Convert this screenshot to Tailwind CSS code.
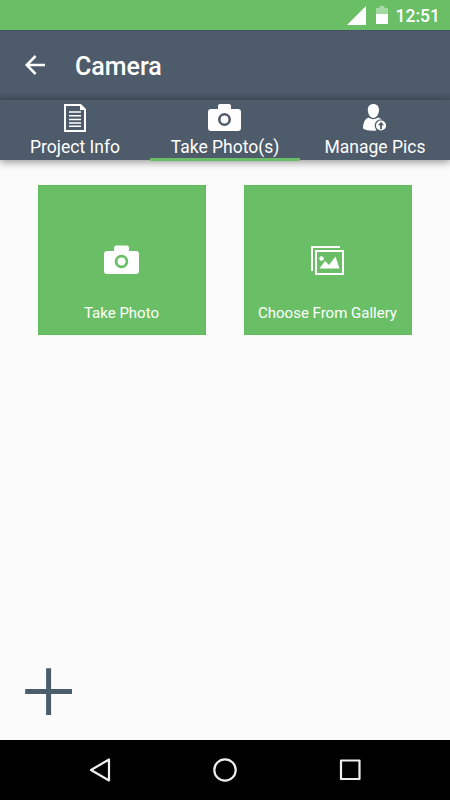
<!DOCTYPE html>
<html lang="en">
<head>
<meta charset="utf-8">
<title>Camera</title>
<script src="https://cdn.jsdelivr.net/npm/@tailwindcss/browser@4"></script>
</head>
<body class="font-[Roboto,sans-serif] text-white">
<div class="flex h-[800px] w-[450px] flex-col overflow-hidden bg-[#fbfbfb]">
  <div class="flex h-[30px] shrink-0 items-center justify-end bg-[#6abf66] pr-[10px]">
    <svg class="mr-[10px] h-[19px] w-[19px]" viewBox="0 0 19 19" fill="#fff"><path d="M19 0V19H0Z"/></svg>
    <svg class="mr-[8px] h-[18px] w-3" viewBox="0 0 12 18"><path fill="#a5d9a3" d="M3.5 0h5v2H12v6H0V2h3.5z"/><path fill="#fff" d="M0 8h12v9.200q0 .8-.8.8H.8Q0 18 0 17.200z"/></svg>
    <span class="pt-[2px] text-[17.500px] leading-[22px] font-medium">12:51</span>
  </div>
  <header class="flex h-[69px] shrink-0 items-center border-t border-[#464f68] bg-linear-to-b from-[#4e5b6a] from-90% to-[#45525f] pl-[25px]">
    <svg class="h-5 w-5" viewBox="0 0 20 20" fill="none" stroke="#fff" stroke-width="2.500"><path d="M20 10H2M10.600 1 1.700 10l8.900 9"/></svg>
    <h1 class="ml-[30px] pt-[3px] text-[25px] leading-[30px] font-medium">Camera</h1>
  </header>
  <nav class="z-10 grid h-[61px] shrink-0 grid-cols-3 border-t border-[#3f4c59] bg-[#4e5b6a] text-[17.500px] leading-[22px] shadow-[0_3px_7px_rgba(0,0,0,0.35)]">
    <div class="flex flex-col items-center pt-1">
      <svg class="h-7 w-[22px]" viewBox="0 0 22 28" fill="none" stroke="#fff"><path stroke-width="2" d="M1 1h15.500L21 5.500V27H1z"/><path fill="#fff" stroke="none" d="M16 1v5h5z"/><path stroke-width="1.500" d="M5 8h12M5 11.700h12M5 15.400h12M5 19.100h12M5 22.300h12"/></svg>
      <span class="mt-1">Project Info</span>
    </div>
    <div class="flex flex-col items-center border-b-[3px] border-[#6abf66] pt-1">
      <svg class="mr-px h-7 w-[33px]" viewBox="0 0 33 28"><path fill="#fff" d="M3 5h7V2q0-2 2-2h9q2 0 2 2v3h7q3 0 3 3v16q0 3-3 3H3q-3 0-3-3V8q0-3 3-3z"/><circle cx="16.500" cy="15.500" r="5.200" fill="none" stroke="#4e5b6a" stroke-width="2.600"/></svg>
      <span class="mt-1">Take Photo(s)</span>
    </div>
    <div class="flex flex-col items-center pt-1">
      <svg class="h-7 w-6" viewBox="0 0 24 28"><path fill="#fff" d="M10.400 0c3.500 0 5.600 2.400 5.600 5.800 0 4.200-2.500 8.200-5.600 8.200S4.800 10 4.800 5.800C4.800 2.400 6.900 0 10.400 0zM5.500 13.500q4.900 3.600 9.800 0 3.700 1.100 4.700 3.500L13 26.500Q4.500 27.200.6 25q-.8-.5-.6-1.800.6-8 5.500-9.700z"/><circle cx="18" cy="21.500" r="5.700" fill="#fff" stroke="#4e5b6a" stroke-width="1.200"/><path fill="#4e5b6a" d="m18 17.800 3 3.400h-2.100v4h-1.800v-4H15z"/></svg>
      <span class="mt-1">Manage Pics</span>
    </div>
  </nav>
  <main class="flex grow flex-col justify-between pt-[25px]">
    <div class="flex gap-[38px] pl-[37.500px] text-[15px] leading-[18px]">
      <div class="flex h-[150px] w-[168px] flex-col items-center border border-[#60bb5d] bg-[#6abf66] pt-[59px]">
        <svg class="mr-px h-[30px] w-[35px]" viewBox="0 0 35 30"><path fill="#fff" d="M3 6h7V3q0-2.500 2-2.500h11q2 0 2 2.500v3h7q3 0 3 3v17q0 3-3 3H3q-3 0-3-3V9q0-3 3-3z"/><circle cx="17.500" cy="16.500" r="5.400" fill="none" stroke="#6abf66" stroke-width="2.800"/></svg>
        <span class="mt-[29px]">Take Photo</span>
      </div>
      <div class="flex h-[150px] w-[168px] flex-col items-center border border-[#60bb5d] bg-[#6abf66] pt-[60px]">
        <svg class="mr-px h-[29px] w-[33px]" viewBox="0 0 33 29" fill="none" stroke="#fff" stroke-width="2"><path d="M1 25V1h28M5 5h27v23H5z"/><circle cx="10.500" cy="12.500" r="2.200" fill="#fff" stroke="none"/><path fill="#fff" stroke="none" d="m8.500 22.500 5.500-7.500 4 4 6.500-8.500 4 12z"/></svg>
        <span class="mt-[29px] whitespace-nowrap">Choose From Gallery</span>
      </div>
    </div>
    <svg class="mb-6 ml-[25px] h-[48px] w-[48px]" viewBox="0 0 48 48" fill="none" stroke="#4b5c6a" stroke-width="5"><path d="M23.600.2v46.800M.2 23.600h46.800"/></svg>
  </main>
  <footer class="flex h-[60px] shrink-0 items-center justify-between bg-black pr-[89px] pl-[89px]">
    <svg class="h-6 w-[22px]" viewBox="0 0 22 24" fill="none" stroke="#eee" stroke-width="2.200" stroke-linejoin="round"><path d="M20 1.500v21L2 12z"/></svg>
    <svg class="h-6 w-6" viewBox="0 0 24 24" fill="none" stroke="#eee" stroke-width="2.200"><circle cx="12" cy="12" r="10.700"/></svg>
    <svg class="h-[22px] w-[22px]" viewBox="0 0 22 22" fill="none" stroke="#eee" stroke-width="2.200" stroke-linejoin="round"><path d="M2 1.500h18.500v18.500h-18.500z"/></svg>
  </footer>
</div>
</body>
</html>
